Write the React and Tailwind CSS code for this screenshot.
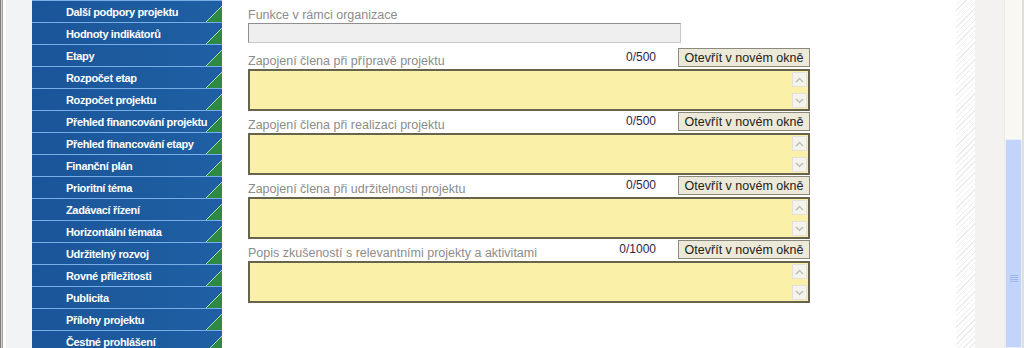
import React from "react";

const menu = [
  "Další podpory projektu",
  "Hodnoty indikátorů",
  "Etapy",
  "Rozpočet etap",
  "Rozpočet projektu",
  "Přehled financování projektu",
  "Přehled financování etapy",
  "Finanční plán",
  "Prioritní téma",
  "Zadávací řízení",
  "Horizontální témata",
  "Udržitelný rozvoj",
  "Rovné příležitosti",
  "Publicita",
  "Přílohy projektu",
  "Čestné prohlášení",
];

const fields = [
  { label: "Zapojení člena při přípravě projektu", count: "0/500" },
  { label: "Zapojení člena při realizaci projektu", count: "0/500" },
  { label: "Zapojení člena při udržitelnosti projektu", count: "0/500" },
  { label: "Popis zkušeností s relevantními projekty a aktivitami", count: "0/1000" },
];

const Corner = () => (
  <svg width="16" height="21" viewBox="0 0 16 21" className="absolute right-0 top-0">
    <polygon points="0,21 16,5 16,21" fill="#2d8a44" />
    <line x1="0" y1="21" x2="16" y2="5" stroke="#a9dcae" strokeWidth="1" />
  </svg>
);

const Arrow = ({ up }) => (
  <div className="w-[15px] h-[15px] bg-[#f4f3ec] border border-[#e4e2d6] flex items-center justify-center">
    <svg width="9" height="6" viewBox="0 0 9 6">
      <polyline
        points={up ? "1,5 4.5,1.5 8,5" : "1,1 4.5,4.5 8,1"}
        fill="none"
        stroke="#b8b6ad"
        strokeWidth="1.2"
      />
    </svg>
  </div>
);

const Field = ({ label, count }) => (
  <div className="flex flex-col">
    <div className="flex items-end h-[20px]">
      <span className="flex-1 text-[12.5px] leading-[14px] text-[#8c8c8c]">{label}</span>
      <span className="text-[12px] leading-[14px] text-[#2b2547] self-start mt-[2px] mr-[22px]">{count}</span>
      <button className="self-start w-[132px] h-[19px] bg-[#ece9d8] border border-[#8a8a80] text-[12.5px] leading-[16px] text-[#222] text-center">
        Otevřít v novém okně
      </button>
    </div>
    <div className="mt-[1px] h-[42px] bg-[#fbf0a8] border-2 border-[#66634f] flex justify-end">
      <div className="flex flex-col justify-between py-[1px] pr-[1px]">
        <Arrow up />
        <Arrow />
      </div>
    </div>
  </div>
);

export default function App() {
  return (
    <div className="w-[1024px] h-[348px] overflow-hidden flex bg-white" style={{ fontFamily: '"Liberation Sans", Arial, sans-serif' }}>
      <div className="w-px bg-[#808080]" />
      <div className="w-px bg-[#d4d0c8]" />
      <div className="w-px bg-[#a0a0a0]" />
      <div className="w-[3px] bg-white" />
      <div className="w-[26px] bg-[#f2f3f5]" />

      <div className="w-[190px] bg-[#1c5a9c] flex flex-col">
        <div className="h-[2px] relative bg-[#1c5a9c]">
          <div className="absolute right-0 top-0 w-[12px] h-[2px] bg-[#2d8a44]" />
        </div>
        {menu.map((m) => (
          <div key={m} className="relative h-[22px] shrink-0 border-t border-[#78aee6] bg-gradient-to-r from-[#1b5599] to-[#1f5fa3]">
            <span className="absolute left-[34px] top-[4px] text-[11px] leading-[14px] text-white font-bold tracking-[-0.35px] whitespace-nowrap">
              {m}
            </span>
            <Corner />
          </div>
        ))}
      </div>

      <div className="flex-1 pl-[26px]">
        <div className="w-[562px] pt-[8px]">
          <div className="text-[12.5px] leading-[14px] text-[#8c8c8c] mb-[1px]">Funkce v rámci organizace</div>
          <div className="w-[433px] h-[20px] bg-[#efefef] border border-[#8f8f8f] border-b-[#c8c8c8] border-r-[#c8c8c8]" />
          <div className="mt-[5px] flex flex-col gap-[1px]">
            {fields.map((f) => (
              <Field key={f.label} {...f} />
            ))}
          </div>
        </div>
      </div>

      <div
        className="w-[19px]"
        style={{
          backgroundImage:
            "repeating-linear-gradient(135deg, #ffffff 0px, #ffffff 3px, #ececec 3px, #ececec 4px)",
        }}
      />
      <div className="w-[29px] bg-[#f3f2f0]" />
      <div className="w-[18px] bg-[#f9f8f2] border-l border-[#ecebe4] flex flex-col">
        <div className="h-[139px]" />
        <div className="flex-1 bg-[#c3d4fc] border border-[#e8eefe] rounded-t-[2px] flex flex-col items-center">
          <div className="mt-[135px] flex flex-col gap-[1px]">
            <div className="w-[8px] h-px bg-[#9fb6ee]" />
            <div className="w-[8px] h-px bg-[#9fb6ee]" />
            <div className="w-[8px] h-px bg-[#9fb6ee]" />
            <div className="w-[8px] h-px bg-[#9fb6ee]" />
          </div>
        </div>
      </div>
      <div className="w-[2px] bg-[#e0dfd8]" />
    </div>
  );
}
